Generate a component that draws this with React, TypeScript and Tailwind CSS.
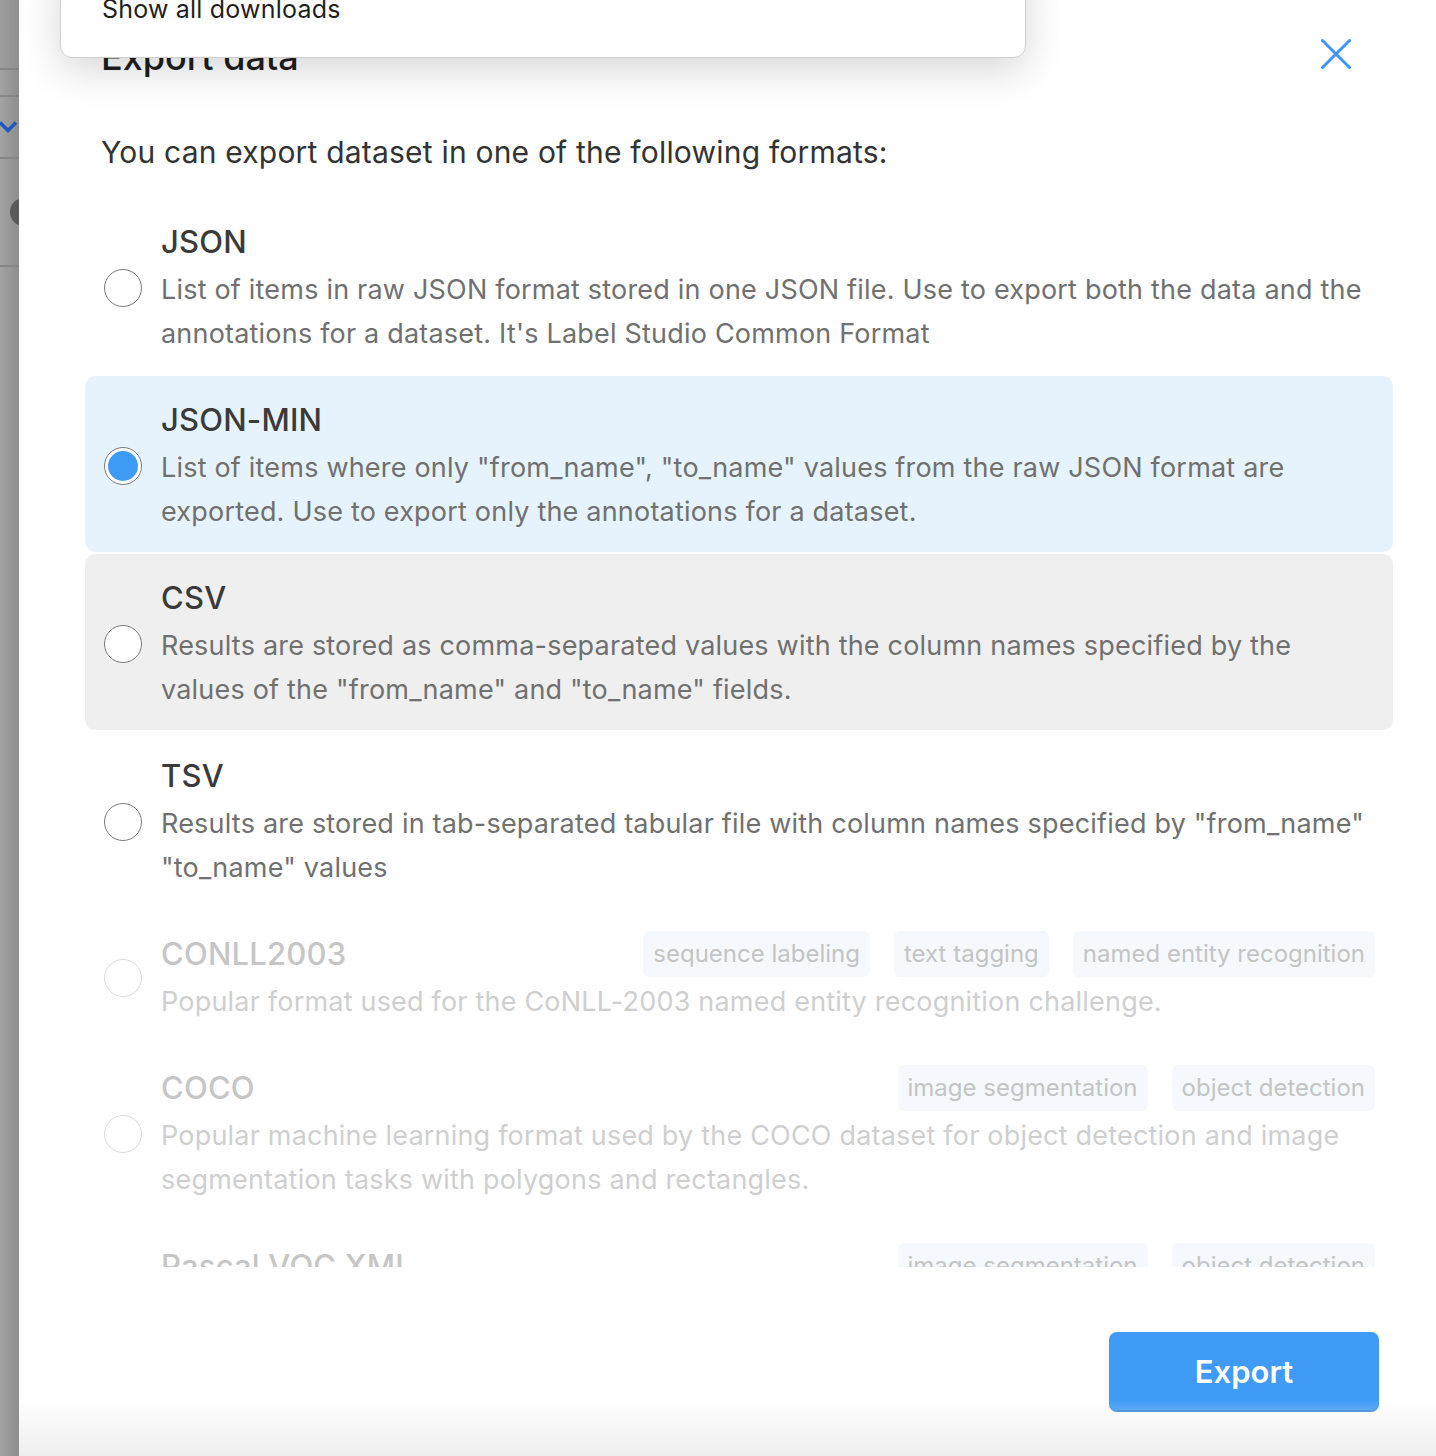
import React from "react";

type Format = {
  title: string;
  description: string;
  tags?: string[];
  disabled?: boolean;
  selected?: boolean;
  hovered?: boolean;
};

const formats: Format[] = [
  {
    title: "JSON",
    description:
      "List of items in raw JSON format stored in one JSON file. Use to export both the data and the annotations for a dataset. It's Label Studio Common Format",
  },
  {
    title: "JSON-MIN",
    description:
      'List of items where only "from_name", "to_name" values from the raw JSON format are exported. Use to export only the annotations for a dataset.',
    selected: true,
  },
  {
    title: "CSV",
    description:
      'Results are stored as comma-separated values with the column names specified by the values of the "from_name" and "to_name" fields.',
    hovered: true,
  },
  {
    title: "TSV",
    description:
      'Results are stored in tab-separated tabular file with column names specified by "from_name" "to_name" values',
  },
  {
    title: "CONLL2003",
    description: "Popular format used for the CoNLL-2003 named entity recognition challenge.",
    tags: ["sequence labeling", "text tagging", "named entity recognition"],
    disabled: true,
  },
  {
    title: "COCO",
    description:
      "Popular machine learning format used by the COCO dataset for object detection and image segmentation tasks with polygons and rectangles.",
    tags: ["image segmentation", "object detection"],
    disabled: true,
  },
  {
    title: "Pascal VOC XML",
    description: "Popular XML format used for object detection and polygon image segmentation tasks.",
    tags: ["image segmentation", "object detection"],
    disabled: true,
  },
];

function Radio({ checked, disabled }: { checked?: boolean; disabled?: boolean }) {
  return (
    <div
      className={`flex h-[38px] w-[38px] shrink-0 items-center justify-center rounded-full border bg-white ${
        disabled ? "border-[#dcdcdc]" : "border-[#7a7a7a]"
      }`}
    >
      {checked && <div className="h-[30px] w-[30px] rounded-full bg-[#3d9bf6]" />}
    </div>
  );
}

function FormatItem({ item }: { item: Format }) {
  const bg = item.selected ? "bg-[#e6f3fd]" : item.hovered ? "bg-[#efefef]" : "bg-transparent";
  return (
    <div className={`flex items-center rounded-[10px] pl-[19px] pr-[18px] pt-[22px] pb-[18px] ${bg}`}>
      <Radio checked={item.selected} disabled={item.disabled} />
      <div className="ml-[19px] flex min-w-0 flex-1 flex-col gap-[4px]">
        <div className="flex h-[44px] items-center justify-between">
          <span
            className={`text-[31px] font-medium leading-[44px] tracking-[0.2px] ${
              item.disabled ? "text-[#c6c6c6]" : "text-[#3a3a3a]"
            }`}
          >
            {item.title}
          </span>
          {item.tags && (
            <div className="flex gap-[24px]">
              {item.tags.map((t) => (
                <span
                  key={t}
                  className="flex h-[46px] items-center rounded-[6px] bg-[#f5f9fd] px-[10px] text-[24px] text-[#c4c4c4]"
                >
                  {t}
                </span>
              ))}
            </div>
          )}
        </div>
        <p
          className={`text-[27px] leading-[44px] tracking-[0.2px] ${
            item.disabled ? "text-[#cfcfcf]" : "text-[#707070]"
          }`}
        >
          {item.description}
        </p>
      </div>
    </div>
  );
}

export default function App() {
  return (
    <div className="relative flex h-[1456px] w-[1436px] overflow-hidden bg-white font-['Inter','Noto_Sans',sans-serif]">
      {/* page behind the modal */}
      <div className="relative flex w-[19px] shrink-0 flex-col overflow-hidden bg-gradient-to-r from-[#a2a2a2] to-[#8e8e8e]">
        <div className="h-[68px] bg-[#969696]/40" />
        <div className="h-[2px] bg-[#858585]" />
        <div className="h-[25px]" />
        <div className="h-[2px] bg-[#858585]" />
        <div className="flex h-[60px] items-center">
          <svg width="19" height="16" viewBox="0 0 19 16" className="-ml-[1px] shrink-0">
            <path d="M1 3.5 L9 11.5 L17 3.5" fill="none" stroke="#1d57c0" strokeWidth="3.5" />
          </svg>
        </div>
        <div className="h-[2px] bg-[#858585]" />
        <div className="flex h-[106px] items-center">
          <div className="ml-[10px] h-[28px] w-[28px] shrink-0 rounded-full bg-[#5a5a5a]" />
        </div>
        <div className="h-[2px] bg-[#858585]" />
      </div>

      {/* modal */}
      <div className="relative flex flex-1 flex-col pl-[66px] pr-[43px]">
        <div className="mt-[33px] flex h-[48px] justify-between pl-[16px]">
          <h2 className="text-[36px] font-medium leading-[48px] text-[#1e1e1e]">Export data</h2>
          <button className="mr-[42px] mt-[6px] flex h-[30px] w-[30px] items-center justify-center">
            <svg width="30" height="30" viewBox="0 0 30 30">
              <path d="M1.5 1.5 L28.5 28.5 M28.5 1.5 L1.5 28.5" stroke="#3b96f5" strokeWidth="3" strokeLinecap="round" />
            </svg>
          </button>
        </div>

        <p className="mt-[49px] pl-[16px] text-[30px] leading-[44px] tracking-[0.2px] text-[#333333]">
          You can export dataset in one of the following formats:
        </p>

        <div className="mt-[24px] flex h-[1069px] flex-col gap-[2px] overflow-hidden">
          {formats.map((f) => (
            <FormatItem key={f.title} item={f} />
          ))}
        </div>

        <div className="mt-[65px] flex justify-end pr-[14px]">
          <button className="h-[80px] w-[270px] rounded-[8px] border-b-[2px] border-[#3583d8] bg-[#3f9bf6] pt-[2px] text-[31px] font-semibold text-white">
            Export
          </button>
        </div>

        <div className="pointer-events-none absolute bottom-0 left-0 right-0 h-[56px] bg-gradient-to-b from-white/0 to-[#eeeeee]" />
      </div>

      {/* browser downloads popup */}
      <div className="absolute left-[60px] top-[-40px] h-[98px] w-[966px] rounded-b-[12px] border border-[#cfcfcf] bg-white pl-[41px] pt-[32px] shadow-[0_12px_40px_rgba(0,0,0,0.16)]">
        <span className="text-[25px] leading-[32px] tracking-[0.2px] text-[#1f1f1f]">Show all downloads</span>
      </div>
    </div>
  );
}
